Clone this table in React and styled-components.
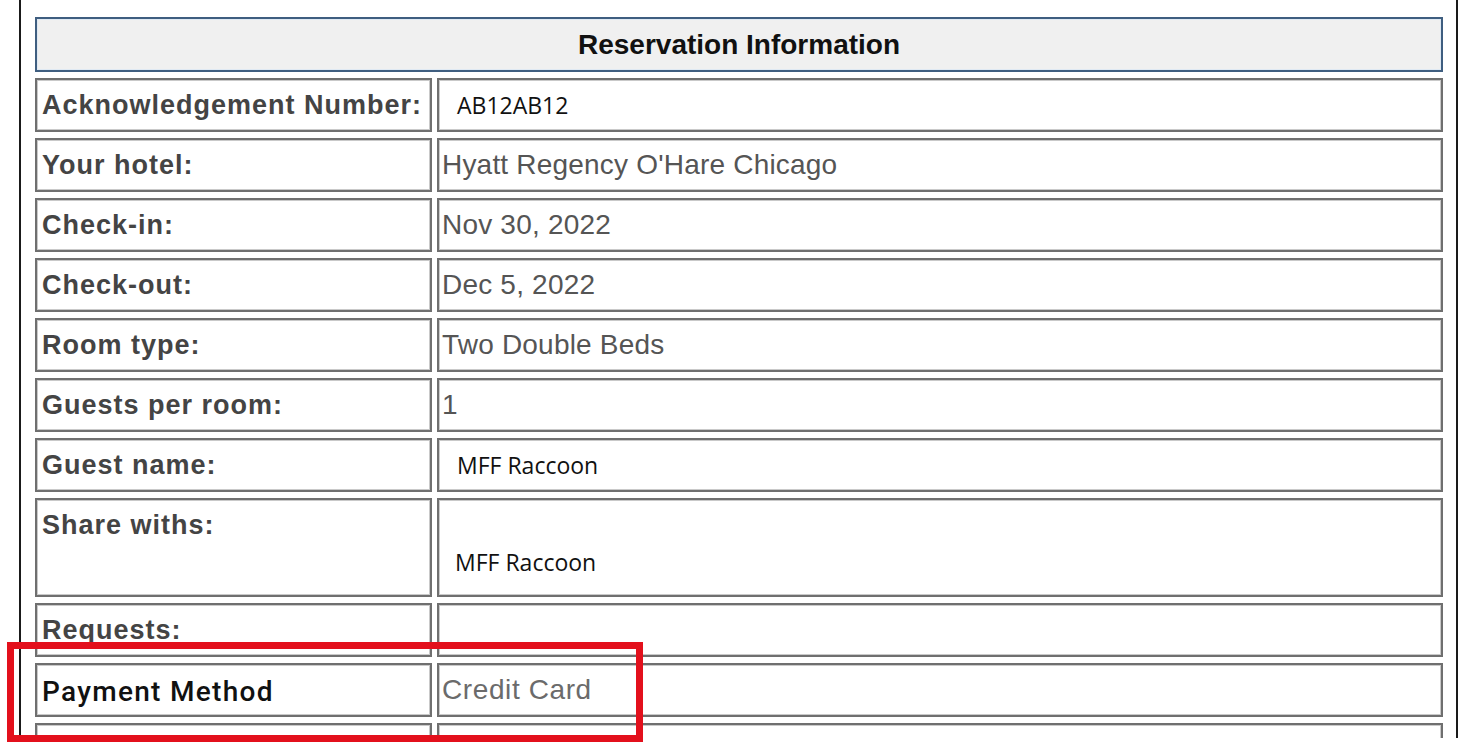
import React from "react";
import styled, { createGlobalStyle } from "styled-components";

const GlobalStyle = createGlobalStyle`
  body {
    margin: 0;
    background: #fff;
    font-family: "Liberation Sans", Arial, sans-serif;
  }
`;

const Frame = styled.div`
  position: relative;
  width: 1480px;
  height: 747px;
  overflow: hidden;
  background: #fff;
`;

const Page = styled.div`
  box-sizing: border-box;
  margin-left: 19px;
  width: 1439px;
  height: 738px;
  padding: 17px 13px 0 14px;
  border-left: 2px solid #1a1a1a;
  border-right: 2px solid #1a1a1a;
  overflow: hidden;
`;

const Title = styled.div`
  box-sizing: border-box;
  height: 55px;
  margin-bottom: 6px;
  border: 2px solid #3f5e80;
  box-shadow: inset 0 0 0 1px #dfe9f3;
  background: #f0f0f0;
  display: flex;
  align-items: center;
  justify-content: center;
  font-family: "Liberation Sans", Arial, sans-serif;
  font-weight: 700;
  font-size: 28px;
  color: #111;
`;

const Grid = styled.div`
  display: grid;
  grid-template-columns: 397px 1fr;
  gap: 5px;
  row-gap: 6px;
`;

const Cell = styled.div`
  box-sizing: border-box;
  height: ${(p) => p.$h || 54}px;
  border: 2px solid #6f6f6f;
  box-shadow: inset 0 0 0 1px #c9c9c9;
  padding: 0 4px 0 ${(p) => p.$pad || 5}px;
  overflow: hidden;
`;

const Label = styled.div`
  font-family: "Liberation Sans", Arial, sans-serif;
  font-weight: 700;
  font-size: 27px;
  line-height: 50px;
  color: #444;
  letter-spacing: 1px;
  white-space: nowrap;
`;

const PlainLabel = styled(Label)`
  font-family: Roboto, "Liberation Sans", sans-serif;
  font-weight: 500;
  font-size: 28px;
  letter-spacing: 1.3px;
  color: #111;
  padding-top: 2px;
`;

const Value = styled.div`
  font-family: "Liberation Sans", Arial, sans-serif;
  font-size: 28px;
  line-height: 50px;
  letter-spacing: ${(p) => p.$spacing || 0.2}px;
  color: ${(p) => p.$color || "#555"};
`;

const TypedValue = styled.div`
  font-family: "Open Sans", "Liberation Sans", sans-serif;
  font-size: 23px;
  line-height: 50px;
  color: #111;
  padding-left: ${(p) => p.$indent || 15}px;
  padding-top: ${(p) => p.$top || 0}px;
`;

const Highlight = styled.div`
  position: absolute;
  left: 7px;
  top: 642px;
  width: 636px;
  height: 100px;
  box-sizing: border-box;
  border: 7px solid #e3101c;
  pointer-events: none;
`;

const rows = [
  { label: "Acknowledgement Number:", typed: "AB12AB12" },
  { label: "Your hotel:", value: "Hyatt Regency O'Hare Chicago" },
  { label: "Check-in:", value: "Nov 30, 2022" },
  { label: "Check-out:", value: "Dec 5, 2022" },
  { label: "Room type:", value: "Two Double Beds" },
  { label: "Guests per room:", value: "1" },
  { label: "Guest name:", typed: "MFF Raccoon" },
  { label: "Share withs:", typed: "MFF Raccoon", h: 99, top: 37, indent: 13 },
  { label: "Requests:" },
  { label: "Payment Method", plain: true, value: "Credit Card", color: "#6b6b6b", spacing: 0.6 },
  { label: "" }
];

export default function App() {
  return (
    <Frame>
      <GlobalStyle />
      <Page>
        <Title>Reservation Information</Title>
        <Grid>
          {rows.map((r, i) => (
            <React.Fragment key={i}>
              <Cell $h={r.h}>
                {r.plain ? <PlainLabel>{r.label}</PlainLabel> : <Label>{r.label}</Label>}
              </Cell>
              <Cell $h={r.h} $pad={3}>
                {r.typed && (
                  <TypedValue $indent={r.indent} $top={r.top}>
                    {r.typed}
                  </TypedValue>
                )}
                {r.value && (
                  <Value $color={r.color} $spacing={r.spacing}>
                    {r.value}
                  </Value>
                )}
              </Cell>
            </React.Fragment>
          ))}
        </Grid>
      </Page>
      <Highlight />
    </Frame>
  );
}
